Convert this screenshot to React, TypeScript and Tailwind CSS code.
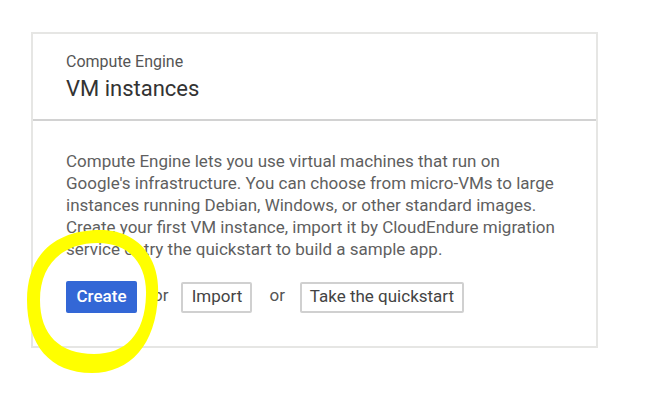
import React from 'react';

export default function App() {
  return (
    <div className="relative w-[653px] h-[405px] bg-white" style={{ fontFamily: 'Roboto, "Liberation Sans", sans-serif' }}>
      <div className="pt-[32px] pl-[31px]">
        <div className="w-[567px] h-[316px] border-2 border-[#e6e6e4] bg-white flex flex-col">
          <div className="pl-[33px] pt-[18px] pb-[16px] border-b-2 border-[#d2d2d2]">
            <div className="text-[16px] leading-[20px] text-[#555]">Compute Engine</div>
            <div className="mt-[3px] text-[22px] leading-[28px] text-[#333]">VM instances</div>
          </div>
          <div className="pl-[33px] pt-[29px]">
            <p className="text-[17px] leading-[22px] text-[#5f5f5f] whitespace-nowrap">
              Compute Engine lets you use virtual machines that run on
              <br />
              Google's infrastructure. You can choose from micro-VMs to large
              <br />
              instances running Debian, Windows, or other standard images.
              <br />
              Create your first VM instance, import it by CloudEndure migration
              <br />
              service or try the quickstart to build a sample app.
            </p>
            <div className="mt-[21px] flex items-center">
              <button className="w-[71px] h-[32px] rounded-[2px] bg-[#3367d6] text-white text-[17px] font-medium">
                Create
              </button>
              <span className="ml-[16px] text-[17px] text-[#555] -mt-[2px]">or</span>
              <button className="ml-[13px] w-[71px] h-[31px] rounded-[2px] border-2 border-[#d0d0d0] bg-white text-[17px] text-[#444]">
                Import
              </button>
              <span className="ml-[17px] text-[17px] text-[#555] -mt-[2px]">or</span>
              <button className="ml-[15px] w-[164px] h-[31px] rounded-[2px] border-2 border-[#d0d0d0] bg-white text-[17px] text-[#444]">
                Take the quickstart
              </button>
            </div>
          </div>
        </div>
      </div>
      {/* hand-drawn highlight around Create */}
      <svg className="absolute left-0 top-0 pointer-events-none" width="653" height="405" viewBox="0 0 653 405">
        <path
          fillRule="evenodd"
          fill="#ffff00"
          d="M 100 230 C 140 230, 160 260, 158 295 C 156 345, 130 373, 92 373 C 50 373, 27 345, 27 300 C 27 255, 55 230, 100 230 Z M 98 243 C 130 243, 147 265, 146 295 C 145 335, 125 354, 94 354 C 60 354, 40 335, 40 300 C 40 265, 62 243, 98 243 Z"
        />
      </svg>
    </div>
  );
}
